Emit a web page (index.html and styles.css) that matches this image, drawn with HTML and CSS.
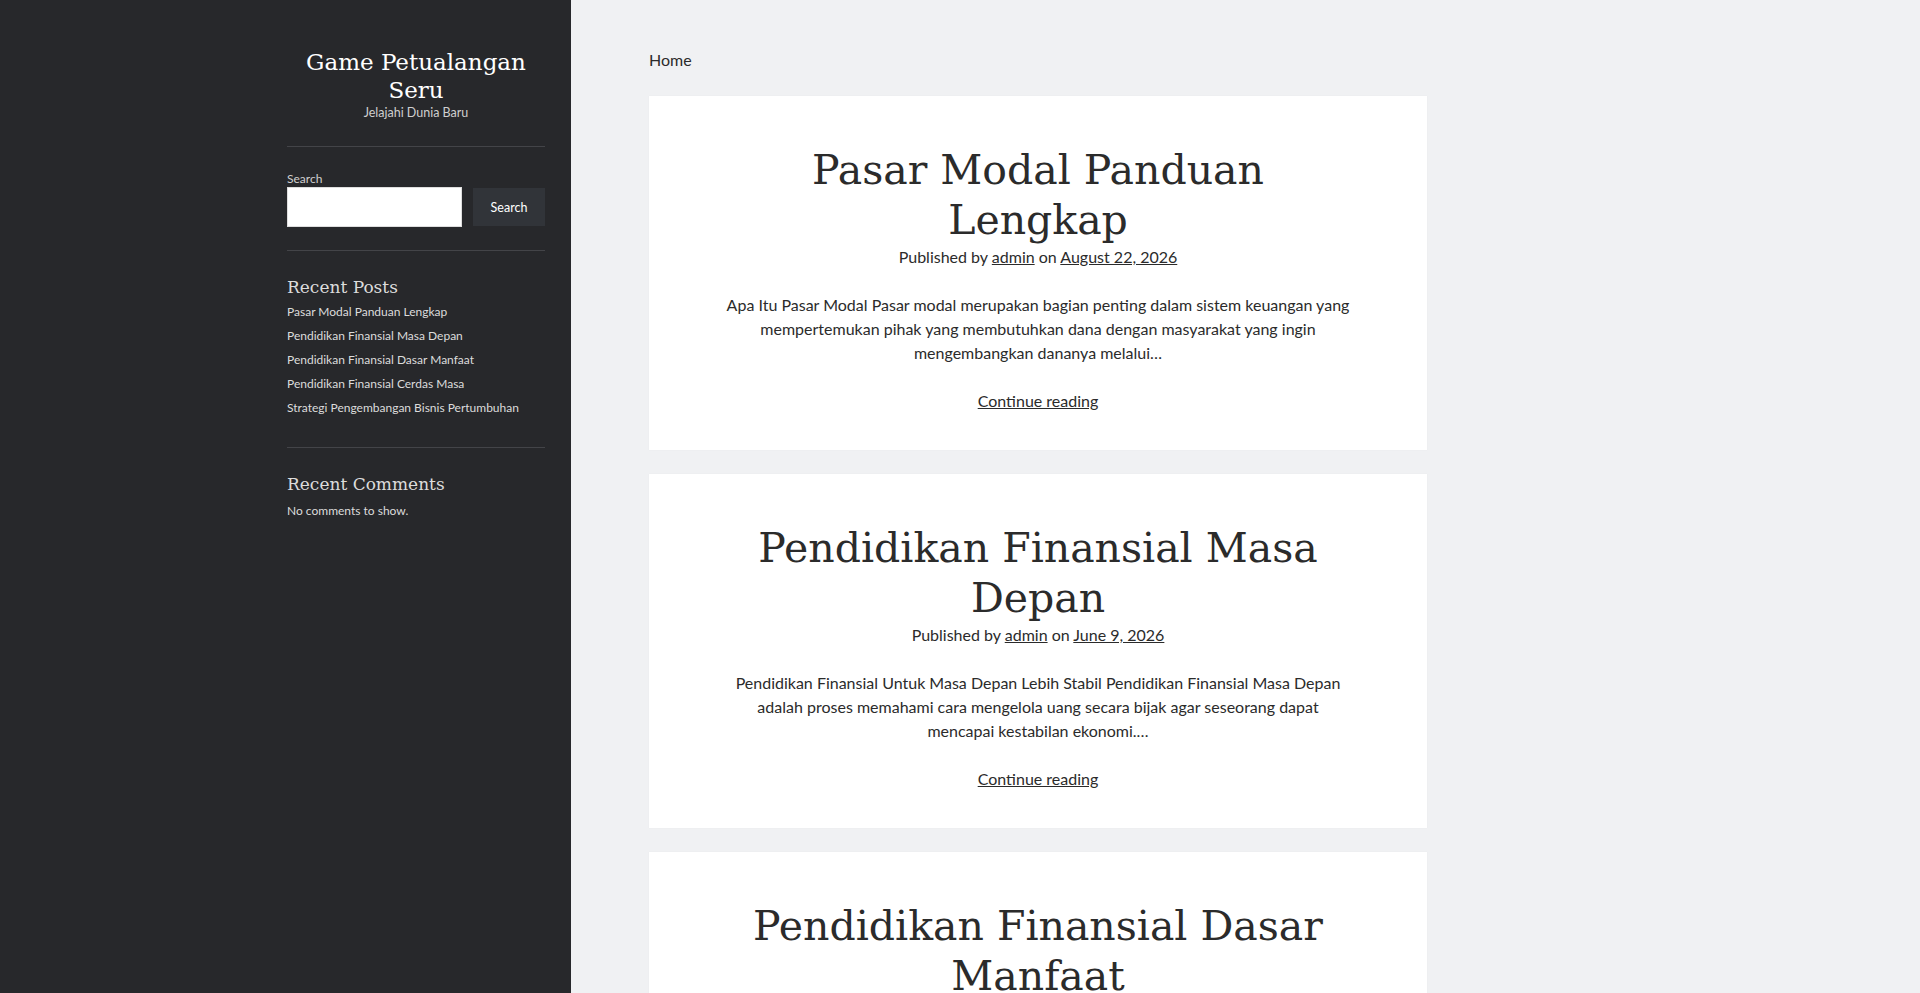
FILE: index.html
```html
<!DOCTYPE html>
<html lang="en">
<head>
    <meta charset="UTF-8">
    <meta name="viewport" content="width=device-width, initial-scale=1.0">
    <title>Game Petualangan Seru</title>
    <link rel="stylesheet" href="styles.css">
</head>
<body>

    <!-- Sidebar -->
    <aside class="sidebar">
        <div class="sidebar-inner">
            <div class="site-branding">
                <h1 class="site-title"><a href="#">Game Petualangan Seru</a></h1>
                <p class="site-description">Jelajahi Dunia Baru</p>
            </div>

            <div class="widget widget-search">
                <form class="search-form" onsubmit="return false;">
                    <label for="searchInput">Search</label>
                    <div class="search-row">
                        <input type="search" id="searchInput">
                        <button type="submit">Search</button>
                    </div>
                </form>
            </div>

            <div class="widget">
                <h2 class="widget-title">Recent Posts</h2>
                <ul class="recent-posts">
                    <li><a href="#">Pasar Modal Panduan Lengkap</a></li>
                    <li><a href="#">Pendidikan Finansial Masa Depan</a></li>
                    <li><a href="#">Pendidikan Finansial Dasar Manfaat</a></li>
                    <li><a href="#">Pendidikan Finansial Cerdas Masa</a></li>
                    <li><a href="#">Strategi Pengembangan Bisnis Pertumbuhan</a></li>
                </ul>
            </div>

            <div class="widget widget-last">
                <h2 class="widget-title">Recent Comments</h2>
                <p class="no-comments">No comments to show.</p>
            </div>
        </div>
    </aside>

    <!-- Main content -->
    <main class="content">
        <div class="breadcrumb">Home</div>

        <article class="post">
            <h2 class="post-title"><a href="#">Pasar Modal Panduan Lengkap</a></h2>
            <div class="post-meta">Published by <a href="#">admin</a> on <a href="#">August 22, 2026</a></div>
            <p class="post-excerpt">Apa Itu Pasar Modal Pasar modal merupakan bagian penting dalam sistem keuangan yang mempertemukan pihak yang membutuhkan dana dengan masyarakat yang ingin mengembangkan dananya melalui&hellip;</p>
            <a class="more-link" href="#">Continue reading</a>
        </article>

        <article class="post">
            <h2 class="post-title"><a href="#">Pendidikan Finansial Masa Depan</a></h2>
            <div class="post-meta">Published by <a href="#">admin</a> on <a href="#">June 9, 2026</a></div>
            <p class="post-excerpt">Pendidikan Finansial Untuk Masa Depan Lebih Stabil Pendidikan Finansial Masa Depan adalah proses memahami cara mengelola uang secara bijak agar seseorang dapat mencapai kestabilan ekonomi.&hellip;</p>
            <a class="more-link" href="#">Continue reading</a>
        </article>

        <article class="post">
            <h2 class="post-title"><a href="#">Pendidikan Finansial Dasar Manfaat</a></h2>
            <div class="post-meta">Published by <a href="#">admin</a> on <a href="#">May 30, 2026</a></div>
            <p class="post-excerpt">Pendidikan finansial dasar adalah pengetahuan penting yang membantu setiap orang memahami cara mengatur uang dengan baik.&hellip;</p>
            <a class="more-link" href="#">Continue reading</a>
        </article>
    </main>

</body>
</html>
```

FILE: styles.css
```css
body {
    font-family: Lato, "Open Sans", sans-serif;
    margin: 0;
    background-color: #f0f1f3;
    color: #2b2b2b;
    display: flex;
    align-items: flex-start;
    min-height: 100vh;
}

a {
    color: inherit;
}

/* Sidebar */
.sidebar {
    width: 571px;
    flex-shrink: 0;
    min-height: 100vh;
    background-color: #27282b;
    color: #dcdcdc;
    box-sizing: border-box;
    padding: 48px 26px 40px 287px;
}

.sidebar-inner {
    width: 258px;
}

.site-branding {
    text-align: center;
    padding-bottom: 24px;
    border-bottom: 1px solid #434448;
}

.site-title {
    font-family: "DejaVu Serif", serif;
    font-weight: normal;
    font-size: 23px;
    line-height: 28px;
    margin: 0;
}

.site-title a {
    color: #fff;
    text-decoration: none;
}

.site-description {
    font-size: 12.5px;
    line-height: 18px;
    margin: 0;
    color: #cfcfcf;
}

.widget {
    padding: 24px 0 23px;
    border-bottom: 1px solid #434448;
}

.widget-last {
    border-bottom: none;
}

.search-form label {
    display: block;
    font-size: 12px;
    line-height: 16px;
    color: #cfcfcf;
}

.search-row {
    display: flex;
    align-items: center;
    justify-content: space-between;
}

.search-row input {
    width: 175px;
    height: 40px;
    box-sizing: border-box;
    border: 1px solid #dedede;
    background-color: #fff;
    padding: 0 8px;
    margin: 0;
}

.search-row button {
    width: 72px;
    height: 38px;
    border: none;
    background-color: #313439;
    color: #fff;
    font-family: Lato, sans-serif;
    font-size: 12.5px;
    cursor: pointer;
    padding: 0;
}

.widget-title {
    font-family: "DejaVu Serif", serif;
    font-weight: normal;
    font-size: 17px;
    line-height: 24px;
    color: #dcdcdc;
    margin: 0;
}

.recent-posts {
    list-style: none;
    margin: 1px 0 4px;
    padding: 0;
}

.recent-posts li {
    font-size: 12px;
    line-height: 24px;
}

.recent-posts a {
    text-decoration: none;
    color: #dcdcdc;
}

.no-comments {
    font-size: 12px;
    line-height: 18px;
    margin: 6px 0 0;
    color: #dcdcdc;
}

/* Main content */
.content {
    width: 778px;
    margin-left: 78px;
}

.breadcrumb {
    font-size: 16px;
    line-height: 24px;
    padding-top: 48px;
    margin-bottom: 24px;
}

.post {
    background-color: #fff;
    box-shadow: 0 0 1px rgba(0, 0, 0, 0.06);
    padding: 49px 73px 37px;
    margin-bottom: 24px;
    text-align: center;
}

.post-title {
    font-family: "DejaVu Serif", serif;
    font-weight: normal;
    font-size: 41px;
    line-height: 50px;
    margin: 0;
}

.post-title a {
    text-decoration: none;
    color: #2b2b2b;
}

.post-meta {
    font-size: 16px;
    line-height: 24px;
}

.post-excerpt {
    font-size: 16px;
    line-height: 24px;
    margin: 24px 0;
}

.more-link {
    font-size: 16px;
    line-height: 24px;
}
```
